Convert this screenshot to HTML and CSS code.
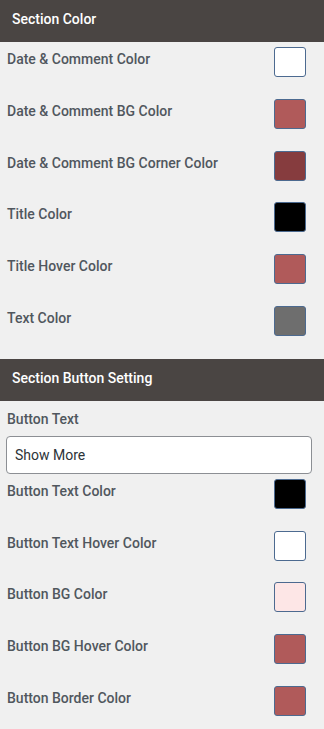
FILE: index.html
```html
<!DOCTYPE html>
<html lang="en">
<head>
  <meta charset="UTF-8" />
  <meta name="viewport" content="width=device-width, initial-scale=1" />
  <title>Section Settings</title>
  <link rel="stylesheet" href="styles.css">
</head>
<body>
  <div class="panel">
    <div class="section">
      <h3 class="section-title">Section Color</h3>
      <div class="row"><label>Date &amp; Comment Color</label><span class="swatch" style="background:#ffffff"></span></div>
      <div class="row"><label>Date &amp; Comment BG Color</label><span class="swatch" style="background:#b05a5a"></span></div>
      <div class="row"><label>Date &amp; Comment BG Corner Color</label><span class="swatch" style="background:#863c3e"></span></div>
      <div class="row"><label>Title Color</label><span class="swatch" style="background:#000000"></span></div>
      <div class="row"><label>Title Hover Color</label><span class="swatch" style="background:#b05a5a"></span></div>
      <div class="row"><label>Text Color</label><span class="swatch" style="background:#6e6e6e"></span></div>
    </div>

    <div class="section">
      <h3 class="section-title">Section Button Setting</h3>
      <div class="field">
        <label>Button Text</label>
        <input type="text" value="Show More" />
      </div>
      <div class="row"><label>Button Text Color</label><span class="swatch" style="background:#000000"></span></div>
      <div class="row"><label>Button Text Hover Color</label><span class="swatch" style="background:#ffffff"></span></div>
      <div class="row"><label>Button BG Color</label><span class="swatch" style="background:#fde6e6"></span></div>
      <div class="row"><label>Button BG Hover Color</label><span class="swatch" style="background:#b05a5a"></span></div>
      <div class="row"><label>Button Border Color</label><span class="swatch" style="background:#b05a5a"></span></div>
    </div>
  </div>
</body>
</html>
```

FILE: styles.css
```css
body {
  margin: 0;
  background: #f0f0f0;
  font-family: Roboto, "Liberation Sans", sans-serif;
}
.panel {
  width: 324px;
}
.section {
  padding-bottom: 6px;
}
.section-title {
  margin: 0;
  height: 42px;
  line-height: 38px;
  padding: 0 12px;
  background: #4a4543;
  color: #fff;
  font-size: 14px;
  font-weight: 500;
}
.row {
  display: flex;
  justify-content: space-between;
  align-items: flex-start;
  height: 51.8px;
  padding: 5px 18px 0 7px;
  box-sizing: border-box;
}
label {
  display: block;
  margin-top: 2px;
  line-height: 20px;
  font-size: 14px;
  font-weight: 500;
  color: #50575e;
}
.swatch {
  width: 32px;
  height: 30px;
  box-sizing: border-box;
  border: 1px solid #4c6a90;
  border-radius: 3px;
}
.field {
  padding: 8px 12px 0 6px;
}
.field label {
  margin: 0 0 7px 1px;
}
.field input {
  display: block;
  width: 100%;
  height: 38px;
  box-sizing: border-box;
  padding: 0 8px;
  border: 1px solid #8c8f94;
  border-radius: 4px;
  background: #fff;
  font-family: Roboto, "Liberation Sans", sans-serif;
  font-size: 14px;
  color: #2c3338;
}
```
